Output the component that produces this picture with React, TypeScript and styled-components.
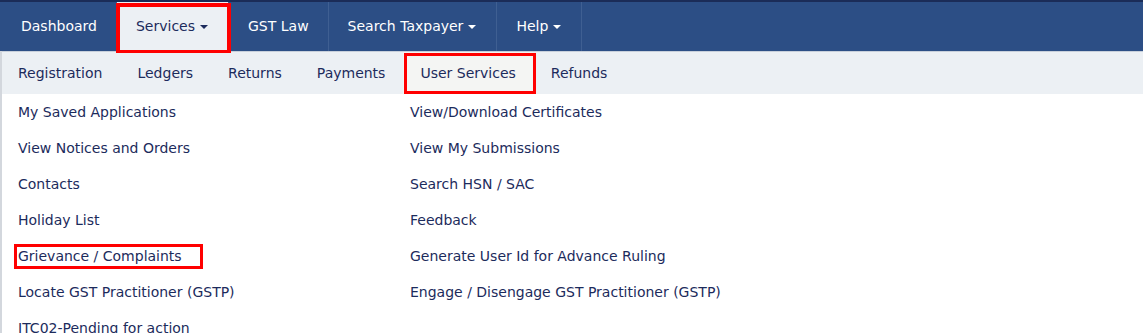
import React from "react";
import styled, { createGlobalStyle } from "styled-components";

const GlobalStyle = createGlobalStyle`
  html, body {
    margin: 0;
    padding: 0;
    background: #ffffff;
    overflow: hidden;
  }
  body {
    font-family: "DejaVu Sans", Verdana, sans-serif;
  }
`;

const Page = styled.div`
  width: 1143px;
`;

const TopBar = styled.nav`
  display: flex;
  height: 49px;
  padding-left: 2px;
  background: #2c4e85;
  border-top: 2px solid #1b2c58;
`;

const TopItem = styled.div<{ $active?: boolean; $marked?: boolean }>`
  position: relative;
  display: flex;
  align-items: center;
  gap: 5px;
  padding: 0 19px 1px;
  font-size: 14px;
  color: ${({ $active }) => ($active ? "#1c2b5c" : "#ffffff")};
  background: ${({ $active }) => ($active ? "#ecf0f4" : "transparent")};
  border-right: 1px solid #3f5f92;
  cursor: pointer;

  &::after {
    content: "";
    display: ${({ $marked }) => ($marked ? "block" : "none")};
    position: absolute;
    left: -1px;
    right: -3px;
    top: 1px;
    bottom: -2px;
    border: 4px solid #ff0000;
    border-bottom-width: 3px;
  }
`;

const Caret = styled.span<{ $dark?: boolean }>`
  width: 0;
  height: 0;
  margin: 2px 1px 0 0;
  border-left: 4px solid transparent;
  border-right: 4px solid transparent;
  border-top: 4px solid ${({ $dark }) => ($dark ? "#1c2b5c" : "#ffffff")};
`;

const Panel = styled.div`
  border-left: 2px solid #d3d7dd;
`;

const SubBar = styled.div`
  display: flex;
  height: 42px;
  background: #ecf0f4;
  border-top: 1px solid #c8d0db;
`;

const SubItem = styled.div<{ $active?: boolean }>`
  position: relative;
  display: flex;
  align-items: center;
  padding: 0 17.5px;
  font-size: 14px;
  color: #1c2b5c;
  background: ${({ $active }) => ($active ? "#f4f5f3" : "transparent")};

  &:first-child {
    padding-left: 16px;
  }

  &::after {
    content: "";
    display: ${({ $active }) => ($active ? "block" : "none")};
    position: absolute;
    left: 1px;
    right: -3px;
    top: 1px;
    bottom: 0;
    border: 3px solid #ff0000;
  }
`;

const Columns = styled.div`
  display: grid;
  grid-template-columns: 392px 1fr;
  background: #ffffff;
`;

const Column = styled.ul`
  list-style: none;
  margin: 0;
  padding: 0 0 0 16px;
`;

const Link = styled.li`
  display: flex;
  align-items: center;
  height: 36px;
`;

const LinkText = styled.span<{ $marked?: boolean }>`
  position: relative;
  font-size: 14px;
  color: #1c2b5c;
  white-space: nowrap;

  &::after {
    content: "";
    display: ${({ $marked }) => ($marked ? "block" : "none")};
    position: absolute;
    left: -4px;
    right: -21px;
    top: -4px;
    bottom: -5px;
    border: 3px solid #ff0000;
  }
`;

const topMenu = [
  { label: "Dashboard" },
  { label: "Services", caret: true, active: true },
  { label: "GST Law" },
  { label: "Search Taxpayer", caret: true },
  { label: "Help", caret: true },
];

const subMenu = ["Registration", "Ledgers", "Returns", "Payments", "User Services", "Refunds"];

const leftLinks = [
  "My Saved Applications",
  "View Notices and Orders",
  "Contacts",
  "Holiday List",
  "Grievance / Complaints",
  "Locate GST Practitioner (GSTP)",
  "ITC02-Pending for action",
];

const rightLinks = [
  "View/Download Certificates",
  "View My Submissions",
  "Search HSN / SAC",
  "Feedback",
  "Generate User Id for Advance Ruling",
  "Engage / Disengage GST Practitioner (GSTP)",
];

export default function App() {
  return (
    <Page>
      <GlobalStyle />
      <TopBar>
        {topMenu.map((item) => (
          <TopItem key={item.label} $active={item.active} $marked={item.active}>
            {item.label}
            {item.caret && <Caret $dark={item.active} />}
          </TopItem>
        ))}
      </TopBar>
      <Panel>
        <SubBar>
          {subMenu.map((label) => (
            <SubItem key={label} $active={label === "User Services"}>
              {label}
            </SubItem>
          ))}
        </SubBar>
        <Columns>
          <Column>
            {leftLinks.map((label) => (
              <Link key={label}>
                <LinkText $marked={label === "Grievance / Complaints"}>{label}</LinkText>
              </Link>
            ))}
          </Column>
          <Column>
            {rightLinks.map((label) => (
              <Link key={label}>
                <LinkText>{label}</LinkText>
              </Link>
            ))}
          </Column>
        </Columns>
      </Panel>
    </Page>
  );
}
